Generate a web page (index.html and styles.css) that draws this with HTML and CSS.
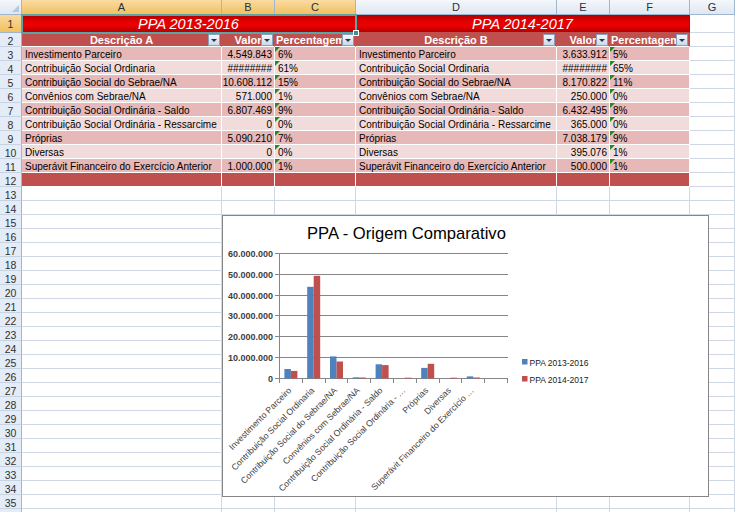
FILE: index.html
```html
<!DOCTYPE html>
<html lang="pt">
<head>
<meta charset="utf-8">
<title>PPA</title>
<link rel="stylesheet" href="styles.css">
</head>
<body>
<div class="sheet">
  <div class="row colhead">
    <div class="corner"></div><div class="sel">A</div><div class="sel">B</div><div class="sel">C</div><div>D</div><div>E</div><div>F</div><div>G</div>
  </div>
  <div class="row r1">
    <div class="rh sel">1</div>
    <div class="title t1">PPA 2013-2016</div>
    <div class="title t2">PPA 2014-2017</div>
    <div></div>
  </div>
  <div class="row r2">
    <div class="rh">2</div>
    <div class="th">Descrição A<span class="dd"></span></div>
    <div class="th">Valor<span class="dd"></span></div>
    <div class="th left">Percentagem<span class="dd"></span></div>
    <div class="th">Descrição B<span class="dd"></span></div>
    <div class="th">Valor<span class="dd"></span></div>
    <div class="th left">Percentagem<span class="dd"></span></div>
    <div></div>
  </div>
  <div class="row data dark">
    <div class="rh">3</div><div>Investimento Parceiro</div><div class="num">4.549.843</div><div class="pct">6%</div><div>Investimento Parceiro</div><div class="num">3.633.912</div><div class="pct">5%</div><div></div>
  </div>
  <div class="row data light">
    <div class="rh">4</div><div>Contribuição Social Ordinaria</div><div class="num">########</div><div class="pct">61%</div><div>Contribuição Social Ordinaria</div><div class="num">########</div><div class="pct">65%</div><div></div>
  </div>
  <div class="row data dark">
    <div class="rh">5</div><div>Contribuição Social do Sebrae/NA</div><div class="num">10.608.112</div><div class="pct">15%</div><div>Contribuição Social do Sebrae/NA</div><div class="num">8.170.822</div><div class="pct">11%</div><div></div>
  </div>
  <div class="row data light">
    <div class="rh">6</div><div>Convênios com Sebrae/NA</div><div class="num">571.000</div><div class="pct">1%</div><div>Convênios com Sebrae/NA</div><div class="num">250.000</div><div class="pct">0%</div><div></div>
  </div>
  <div class="row data dark">
    <div class="rh">7</div><div>Contribuição Social Ordinária - Saldo</div><div class="num">6.807.469</div><div class="pct">9%</div><div>Contribuição Social Ordinária - Saldo</div><div class="num">6.432.495</div><div class="pct">8%</div><div></div>
  </div>
  <div class="row data light">
    <div class="rh">8</div><div>Contribuição Social Ordinária - Ressarcime</div><div class="num">0</div><div class="pct">0%</div><div>Contribuição Social Ordinária - Ressarcime</div><div class="num">365.000</div><div class="pct">0%</div><div></div>
  </div>
  <div class="row data dark">
    <div class="rh">9</div><div>Próprias</div><div class="num">5.090.210</div><div class="pct">7%</div><div>Próprias</div><div class="num">7.038.179</div><div class="pct">9%</div><div></div>
  </div>
  <div class="row data light">
    <div class="rh">10</div><div>Diversas</div><div class="num">0</div><div class="pct">0%</div><div>Diversas</div><div class="num">395.076</div><div class="pct">1%</div><div></div>
  </div>
  <div class="row data dark">
    <div class="rh">11</div><div>Superávit Financeiro do Exercício Anterior</div><div class="num">1.000.000</div><div class="pct">1%</div><div>Superávit Financeiro do Exercício Anterior</div><div class="num">500.000</div><div class="pct">1%</div><div></div>
  </div>
  <div class="row data total">
    <div class="rh">12</div><div></div><div></div><div></div><div></div><div></div><div></div><div></div>
  </div>
  <div class="row"><div class="rh">13</div><div></div><div></div><div></div><div></div><div></div><div></div><div></div></div>
  <div class="row"><div class="rh">14</div><div></div><div></div><div></div><div></div><div></div><div></div><div></div></div>
  <div class="row"><div class="rh">15</div><div></div><div></div><div></div><div></div><div></div><div></div><div></div></div>
  <div class="row"><div class="rh">16</div><div></div><div></div><div></div><div></div><div></div><div></div><div></div></div>
  <div class="row"><div class="rh">17</div><div></div><div></div><div></div><div></div><div></div><div></div><div></div></div>
  <div class="row"><div class="rh">18</div><div></div><div></div><div></div><div></div><div></div><div></div><div></div></div>
  <div class="row"><div class="rh">19</div><div></div><div></div><div></div><div></div><div></div><div></div><div></div></div>
  <div class="row"><div class="rh">20</div><div></div><div></div><div></div><div></div><div></div><div></div><div></div></div>
  <div class="row"><div class="rh">21</div><div></div><div></div><div></div><div></div><div></div><div></div><div></div></div>
  <div class="row"><div class="rh">22</div><div></div><div></div><div></div><div></div><div></div><div></div><div></div></div>
  <div class="row"><div class="rh">23</div><div></div><div></div><div></div><div></div><div></div><div></div><div></div></div>
  <div class="row"><div class="rh">24</div><div></div><div></div><div></div><div></div><div></div><div></div><div></div></div>
  <div class="row"><div class="rh">25</div><div></div><div></div><div></div><div></div><div></div><div></div><div></div></div>
  <div class="row"><div class="rh">26</div><div></div><div></div><div></div><div></div><div></div><div></div><div></div></div>
  <div class="row"><div class="rh">27</div><div></div><div></div><div></div><div></div><div></div><div></div><div></div></div>
  <div class="row"><div class="rh">28</div><div></div><div></div><div></div><div></div><div></div><div></div><div></div></div>
  <div class="row"><div class="rh">29</div><div></div><div></div><div></div><div></div><div></div><div></div><div></div></div>
  <div class="row"><div class="rh">30</div><div></div><div></div><div></div><div></div><div></div><div></div><div></div></div>
  <div class="row"><div class="rh">31</div><div></div><div></div><div></div><div></div><div></div><div></div><div></div></div>
  <div class="row"><div class="rh">32</div><div></div><div></div><div></div><div></div><div></div><div></div><div></div></div>
  <div class="row"><div class="rh">33</div><div></div><div></div><div></div><div></div><div></div><div></div><div></div></div>
  <div class="row"><div class="rh">34</div><div></div><div></div><div></div><div></div><div></div><div></div><div></div></div>
  <div class="row"><div class="rh">35</div><div></div><div></div><div></div><div></div><div></div><div></div><div></div></div>
  <div class="row"><div class="rh"></div><div></div><div></div><div></div><div></div><div></div><div></div><div></div></div>
</div>

<div class="selection"><span class="handle"></span></div>

<div class="chart">
  <svg width="487" height="282" viewBox="0 0 487 282" xmlns="http://www.w3.org/2000/svg">
    <rect x="0.5" y="0.5" width="486" height="281" fill="#fff" stroke="#868686"/>
    <text class="ctitle" x="85" y="24">PPA - Origem Comparativo</text>
    <g stroke="#868686" stroke-width="1" shape-rendering="crispEdges">
      <line x1="53" y1="38.5" x2="285.5" y2="38.5"/>
      <line x1="53" y1="59.5" x2="285.5" y2="59.5"/>
      <line x1="53" y1="80.5" x2="285.5" y2="80.5"/>
      <line x1="53" y1="100.5" x2="285.5" y2="100.5"/>
      <line x1="53" y1="121.5" x2="285.5" y2="121.5"/>
      <line x1="53" y1="142.5" x2="285.5" y2="142.5"/>
      <line x1="53" y1="163.5" x2="285.5" y2="163.5"/>
      <line x1="57.5" y1="38.5" x2="57.5" y2="163.5"/>
      <line x1="57.5" y1="163.5" x2="57.5" y2="167.5"/>
      <line x1="80.3" y1="163.5" x2="80.3" y2="167.5"/>
      <line x1="103.1" y1="163.5" x2="103.1" y2="167.5"/>
      <line x1="125.9" y1="163.5" x2="125.9" y2="167.5"/>
      <line x1="148.7" y1="163.5" x2="148.7" y2="167.5"/>
      <line x1="171.5" y1="163.5" x2="171.5" y2="167.5"/>
      <line x1="194.3" y1="163.5" x2="194.3" y2="167.5"/>
      <line x1="217.1" y1="163.5" x2="217.1" y2="167.5"/>
      <line x1="239.9" y1="163.5" x2="239.9" y2="167.5"/>
      <line x1="262.7" y1="163.5" x2="262.7" y2="167.5"/>
      <line x1="285.5" y1="163.5" x2="285.5" y2="167.5"/>
    </g>
    <g class="ylab">
      <text x="51" y="41.5">60.000.000</text>
      <text x="51" y="62.5">50.000.000</text>
      <text x="51" y="83.5">40.000.000</text>
      <text x="51" y="103.5">30.000.000</text>
      <text x="51" y="124.5">20.000.000</text>
      <text x="51" y="145.5">10.000.000</text>
      <text x="51" y="166.5">0</text>
    </g>
    <g fill="#4f81bd">
      <rect x="62.4" y="154.0" width="6.5" height="9.5"/>
      <rect x="85.2" y="71.8" width="6.5" height="91.7"/>
      <rect x="108.0" y="141.4" width="6.5" height="22.1"/>
      <rect x="130.8" y="162.3" width="6.5" height="1.2"/>
      <rect x="153.6" y="149.3" width="6.5" height="14.2"/>
      <rect x="199.2" y="152.9" width="6.5" height="10.6"/>
      <rect x="244.8" y="161.4" width="6.5" height="2.1"/>
    </g>
    <g fill="#c0504d">
      <rect x="68.9" y="155.9" width="6.5" height="7.6"/>
      <rect x="91.7" y="60.8" width="6.5" height="102.7"/>
      <rect x="114.5" y="146.5" width="6.5" height="17.0"/>
      <rect x="137.3" y="162.5" width="6.5" height="1.0"/>
      <rect x="160.1" y="150.1" width="6.5" height="13.4"/>
      <rect x="182.9" y="162.7" width="6.5" height="0.8"/>
      <rect x="205.7" y="148.8" width="6.5" height="14.7"/>
      <rect x="228.5" y="162.7" width="6.5" height="0.8"/>
      <rect x="251.3" y="162.5" width="6.5" height="1.0"/>
    </g>
    <g class="xlab">
      <text transform="translate(70 176) rotate(-45)">Investimento Parceiro</text>
      <text transform="translate(92.8 176) rotate(-45)">Contribuição Social Ordinaria</text>
      <text transform="translate(115.6 176) rotate(-45)">Contribuição Social do Sebrae/NA</text>
      <text transform="translate(138.4 176) rotate(-45)">Convênios com Sebrae/NA</text>
      <text transform="translate(161.2 176) rotate(-45)">Contribuição Social Ordinária - Saldo</text>
      <text transform="translate(184 176) rotate(-45)">Contribuição Social Ordinária - …</text>
      <text transform="translate(206.8 176) rotate(-45)">Próprias</text>
      <text transform="translate(229.6 176) rotate(-45)">Diversas</text>
      <text transform="translate(252.4 176) rotate(-45)">Superávit Financeiro do Exercício …</text>
    </g>
    <rect x="300" y="144" width="5.5" height="5.5" fill="#4f81bd"/>
    <text class="leg" x="307.5" y="150.5">PPA 2013-2016</text>
    <rect x="300" y="161" width="5.5" height="5.5" fill="#c0504d"/>
    <text class="leg" x="307.5" y="167.5">PPA 2014-2017</text>
  </svg>
</div>
</body>
</html>
```

FILE: styles.css
```css
* { box-sizing: border-box; }
html, body { margin: 0; padding: 0; }
body {
  width: 735px;
  height: 512px;
  overflow: hidden;
  position: relative;
  background: #fff;
  font-family: "Liberation Sans", Arial, sans-serif;
  color: #000;
}
.sheet { display: flex; flex-direction: column; }
.row {
  display: grid;
  grid-template-columns: 22px 200px 53px 81px 201px 53px 80px 45px;
  height: 14px;
  flex: none;
}
.row > div {
  border-right: 1px solid #d0d7e5;
  border-bottom: 1px solid #d0d7e5;
  overflow: hidden;
  white-space: nowrap;
  font-size: 10px;
  line-height: 12px;
  padding: 2px 0 0 3px;
}
.row > .rh {
  background: #e4ecf7;
  border-right-color: #9eb6ce;
  border-bottom-color: #c5d3e2;
  color: #303030;
  font-size: 10.5px;
  text-align: center;
  padding: 2px 0 0;
}
.row > .rh.sel { background: linear-gradient(#f9d99f, #f1c15f); border-bottom-color: #9eb6ce; }

/* column headers */
.colhead { height: 15px; }
.row.colhead > div {
  background: linear-gradient(#f4f7fb, #dfe7f2);
  border-right: 1px solid #9eb6ce;
  border-bottom: 1px solid #9eb6ce;
  font-size: 11px;
  line-height: 13px;
  text-align: center;
  padding: 1px 0 0;
  color: #27313f;
}
.row.colhead > .sel { background: linear-gradient(#f9dba3, #f1c15f); }
.row.colhead > .corner { position: relative; }
.corner::after {
  content: "";
  position: absolute;
  right: 2px;
  bottom: 2px;
  border-bottom: 7px solid #b6c7da;
  border-left: 7px solid transparent;
}

/* title row */
.row.r1 { height: 18px; }
.row.r1 > .rh { padding-top: 3px; }
.row > .title {
  grid-column: span 3;
  background: linear-gradient(#b00000 0%, #e00000 35%, #ec0000 60%, #b80000 100%);
  color: #fff;
  font-style: italic;
  font-size: 14.5px;
  line-height: 16px;
  text-align: center;
  padding: 1px 0 0;
  border-right-color: #8a1a1a;
  border-bottom-color: #c0504d;
}

/* table header row */
.row > .th {
  background: #c0504d;
  color: #fff;
  font-weight: bold;
  font-size: 11px;
  line-height: 13px;
  text-align: center;
  padding: 1px 0 0;
  position: relative;
  border-right-color: #c0504d;
  border-bottom-color: #fff;
}
.row > .th.left { text-align: left; padding-left: 1px; }
.dd {
  position: absolute;
  right: 1px;
  top: 1px;
  width: 12px;
  height: 12px;
  border: 1px solid #8aa0bd;
  background: linear-gradient(#f6f8fc, #cdd8e7);
}
.dd::after {
  content: "";
  position: absolute;
  left: 2px;
  top: 4px;
  border-top: 3px solid #1d3560;
  border-left: 3px solid transparent;
  border-right: 3px solid transparent;
}

/* data rows */
.row.dark > div { background: #e6b8b7; border-right-color: #fff; border-bottom-color: #fff; }
.row.light > div { background: #f2dcdb; border-right-color: #fff; border-bottom-color: #fff; }
.row.total > div { background: #c0504d; border-right-color: #fff; border-bottom-color: #fff; }
.row.data > .rh { background: #e4ecf7; border-right-color: #9eb6ce; border-bottom-color: #c5d3e2; }
.row.data > div:last-child { background: #fff; border-right-color: #d0d7e5; border-bottom-color: #d0d7e5; }
.row > .num { text-align: right; padding-left: 0; padding-right: 2px; }
.row > .pct { position: relative; padding-left: 3px; }
.pct::before {
  content: "";
  position: absolute;
  left: 0;
  top: 0;
  border-top: 5px solid #1e8c1e;
  border-right: 5px solid transparent;
}

/* selection overlay */
.selection {
  position: absolute;
  left: 21px;
  top: 14px;
  width: 336px;
  height: 20px;
  border: 2px solid #5aa5a5;
}
.handle {
  position: absolute;
  right: -4px;
  bottom: -4px;
  width: 6px;
  height: 6px;
  background: #3d8f8f;
  border: 1px solid #fff;
}

/* chart */
.chart {
  position: absolute;
  left: 222px;
  top: 215px;
  width: 487px;
  height: 282px;
}
.chart svg { display: block; font-family: "Liberation Sans", Arial, sans-serif; }
.ctitle { font-size: 16.6px; fill: #000; }
.ylab text { font-size: 9px; font-weight: bold; fill: #404040; text-anchor: end; }
.xlab text { font-size: 8.7px; fill: #404040; text-anchor: end; }
.leg { font-size: 8.5px; fill: #202020; }
```
